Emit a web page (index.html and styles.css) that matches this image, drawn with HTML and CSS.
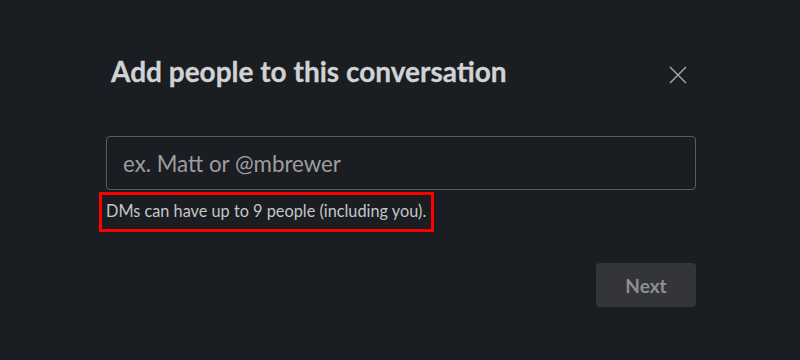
FILE: index.html
```html
<!DOCTYPE html>
<html lang="en">
<head>
<meta charset="utf-8">
<title>Add people</title>
<link rel="stylesheet" href="styles.css">
</head>
<body>
<div class="modal">
  <div class="header">
    <h1 class="title">Add people to this conversation</h1>
    <button class="close" aria-label="Close">
      <svg width="18" height="18" viewBox="0 0 18 18"><path d="M1 1L17 17M17 1L1 17" stroke="#a3a4a6" stroke-width="1.5" fill="none"/></svg>
    </button>
  </div>
  <div class="field">ex. Matt or @mbrewer</div>
  <div class="hint">DMs can have up to 9 people (including you).</div>
  <div class="footer">
    <button class="next">Next</button>
  </div>
</div>
</body>
</html>
```
FILE: styles.css
```css
html, body {
  margin: 0;
  padding: 0;
  background: #1a1d21;
  font-family: Lato, "Noto Sans", sans-serif;
  width: 800px;
  height: 360px;
  overflow: hidden;
}
.modal {
  width: 590px;
  padding: 53px 0 0 106px;
  display: flex;
  flex-direction: column;
  align-items: flex-start;
}
.header {
  width: 100%;
  height: 36px;
  display: flex;
  justify-content: space-between;
  align-items: flex-start;
}
.title {
  margin: 0 0 0 5px;
  font-size: 28px;
  line-height: 36px;
  font-weight: 700;
  color: #d1d2d3;
  -webkit-text-stroke: 0.3px #d1d2d3;
}
.close {
  flex: none;
  width: 36px;
  height: 36px;
  margin-top: 4px;
  padding: 0;
  border: 0;
  background: transparent;
  display: flex;
  align-items: center;
  justify-content: center;
}
.field {
  box-sizing: border-box;
  width: 590px;
  height: 54px;
  margin-top: 47px;
  border: 1px solid #5a5c5f;
  border-radius: 4px;
  padding: 0 16px;
  display: flex;
  align-items: center;
  font-size: 22.3px;
  color: #9d9ea0;
}
.hint {
  margin: 2px 0 0 -7px;
  border: 3px solid #ff0000;
  padding: 0 5px 2px 4px;
  font-size: 16.3px;
  line-height: 32px;
  color: #c5c6c7;
}
.footer {
  width: 100%;
  display: flex;
  justify-content: flex-end;
  margin-top: 31px;
}
.next {
  width: 100px;
  height: 44px;
  border: 0;
  border-radius: 4px;
  background: #343538;
  color: #8e8f91;
  font-family: Lato, "Noto Sans", sans-serif;
  font-size: 19px;
  font-weight: 700;
}
```
